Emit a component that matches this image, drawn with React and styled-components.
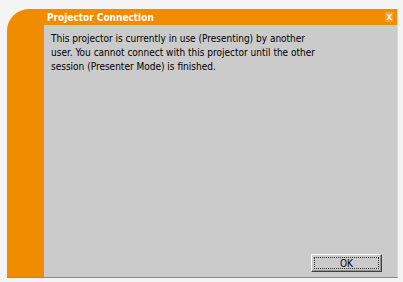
import React from "react";
import styled, { createGlobalStyle } from "styled-components";

const Global = createGlobalStyle`
  html, body {
    margin: 0;
    padding: 0;
    background: #f4f4f4;
    width: 403px;
    height: 282px;
    overflow: hidden;
  }
`

const Screen = styled.div`
  width: 403px;
  height: 282px;
  padding: 9px 5px 4px 7px;
  box-sizing: border-box;
  display: flex;
`

const Window = styled.div`
  flex: 1;
  display: flex;
  flex-direction: column;
  background: #f08c00;
  border-top-left-radius: 22px;
  padding-left: 37px;
  border-bottom: 1px solid #8a8a8a;
  border-right: 1px solid #dadada;
`

const TitleBar = styled.div`
  height: 16px;
  display: flex;
  align-items: center;
  justify-content: space-between;
  padding: 0 4px 0 3px;
  color: #ffffff;
  font-family: "DejaVu Sans Condensed", "DejaVu Sans", sans-serif;
  font-size: 10px;
  font-weight: bold;
`

const Close = styled.span`
  font-family: "Liberation Sans", sans-serif;
  font-size: 10px;
  font-weight: bold;
  line-height: 1;
  padding: 0 1px;
  background: #f5a030;
`

const Content = styled.div`
  flex: 1;
  display: flex;
  flex-direction: column;
  justify-content: space-between;
  background: #cbcbcb;
  padding: 7px 15px 5px 7px;
`

const Message = styled.p`
  margin: 0;
  color: #000;
  font-family: "DejaVu Sans Condensed", "DejaVu Sans", sans-serif;
  font-size: 10px;
  line-height: 14px;
  width: 268px;
`

const Footer = styled.div`
  display: flex;
  justify-content: flex-end;
`

const Botao = styled.button`
  width: 71px;
  height: 18px;
  padding: 0;
  background: #cbcbcb;
  border: 1px solid;
  border-color: #ffffff #404040 #404040 #ffffff;
  box-shadow: inset -1px -1px 0 #909090;
  font-family: "DejaVu Sans Condensed", "DejaVu Sans", sans-serif;
  font-size: 10px;
  color: #000;
  display: flex;
  align-items: stretch;
`

const Foco = styled.span`
  flex: 1;
  margin: 2px;
  border: 1px dotted #303030;
  display: flex;
  align-items: center;
  justify-content: center;
`

class App extends React.Component {
  render() {
    return (
      <Screen>
        <Global />
        <Window>
          <TitleBar>
            <span>Projector Connection</span>
            <Close>x</Close>
          </TitleBar>
          <Content>
            <Message>
              This projector is currently in use (Presenting) by another user. You cannot connect with this projector until the other session (Presenter Mode) is finished.
            </Message>
            <Footer>
              <Botao><Foco>OK</Foco></Botao>
            </Footer>
          </Content>
        </Window>
      </Screen>
    );
  }
}

export default App;
